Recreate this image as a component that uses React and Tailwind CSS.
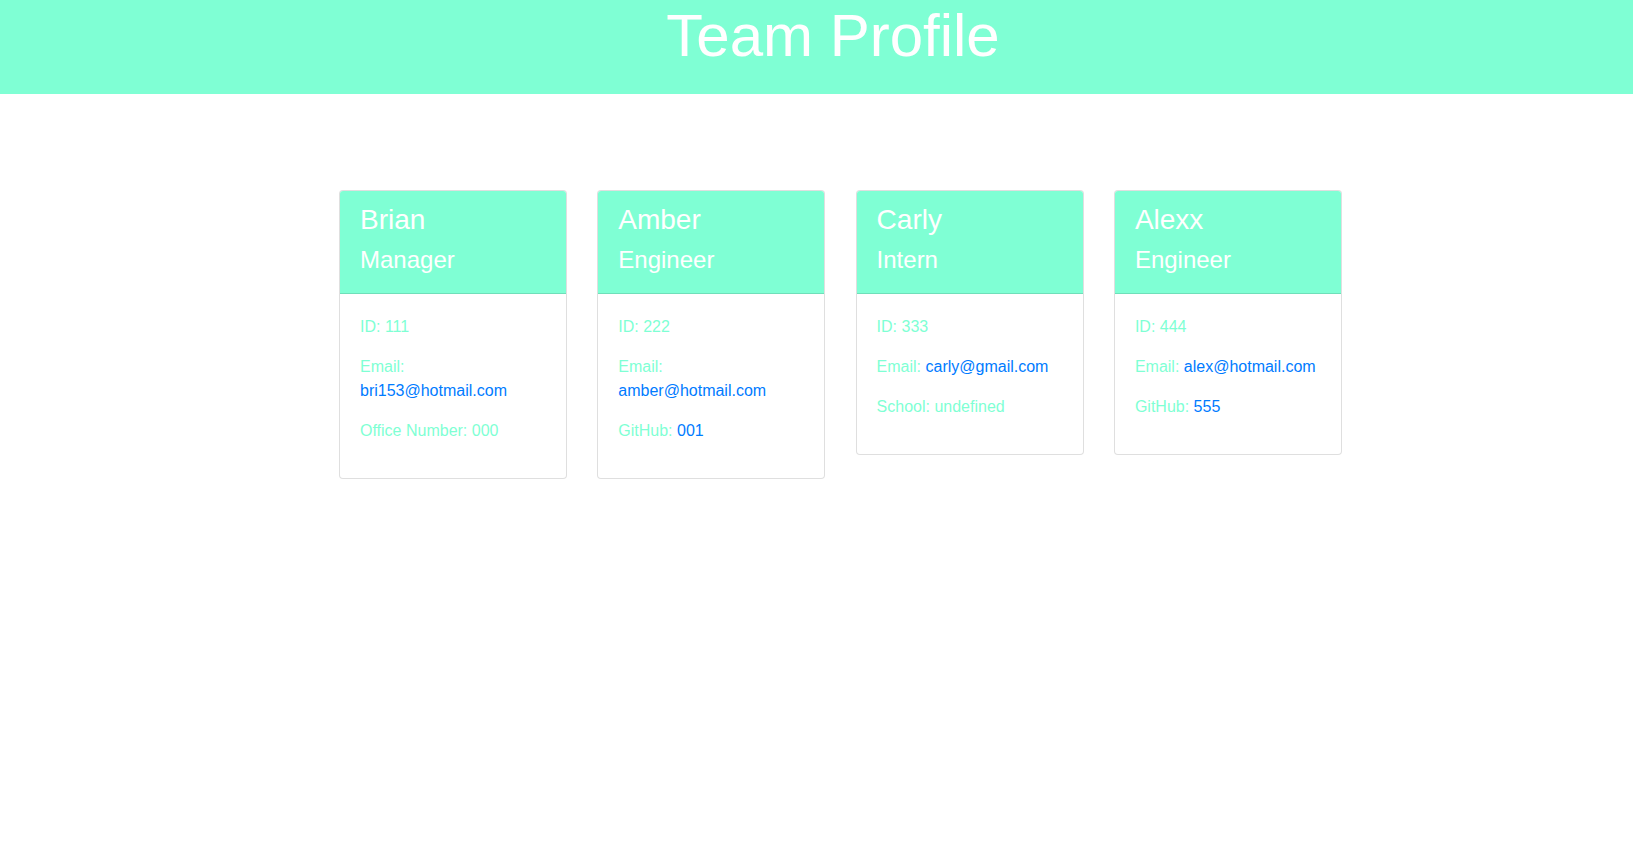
import React from "react";

const team = [
  { name: "Brian", role: "Manager", id: "111", email: "bri153@hotmail.com", extraLabel: "Office Number:", extra: "000", extraLink: false },
  { name: "Amber", role: "Engineer", id: "222", email: "amber@hotmail.com", extraLabel: "GitHub:", extra: "001", extraLink: true },
  { name: "Carly", role: "Intern", id: "333", email: "carly@gmail.com", extraLabel: "School:", extra: "undefined", extraLink: false },
  { name: "Alexx", role: "Engineer", id: "444", email: "alex@hotmail.com", extraLabel: "GitHub:", extra: "555", extraLink: true },
];

function Card({ m }) {
  return (
    <div className="w-[228px] shrink-0 rounded-[4px] border border-black/[.125] bg-white overflow-hidden">
      <div className="bg-[#7fffd4] px-5 py-3 border-b border-black/[.125]">
        <h3 className="text-[28px] leading-[1.2] mb-[9px] text-white">{m.name}</h3>
        <h4 className="text-[24px] leading-[1.2] mb-[7px] text-white">{m.role}</h4>
      </div>
      <div className="px-5 pt-[21px] pb-[19px]">
        <p className="text-base leading-6 mb-4 text-[#7fffd4]">ID: {m.id}</p>
        <p className="text-base leading-6 mb-4 text-[#7fffd4]">
          Email: <a className="text-[#007bff]">{m.email}</a>
        </p>
        <p className="text-base leading-6 mb-4 text-[#7fffd4]">
          {m.extraLabel}{" "}
          {m.extraLink ? <a className="text-[#007bff]">{m.extra}</a> : m.extra}
        </p>
      </div>
    </div>
  );
}

export default function App() {
  return (
    <div className="min-h-[853px] bg-white" style={{ fontFamily: '"Liberation Sans", Arial, sans-serif' }}>
      <header className="h-[94px] bg-[#7fffd4] pl-[33px] text-center">
        <h1 className="text-[60px] leading-[72px] font-normal text-white">Team Profile</h1>
      </header>
      <main className="flex items-start gap-[30.3px] pl-[339px] pt-[96px]">
        {team.map((m) => (
          <Card key={m.name} m={m} />
        ))}
      </main>
    </div>
  );
}
